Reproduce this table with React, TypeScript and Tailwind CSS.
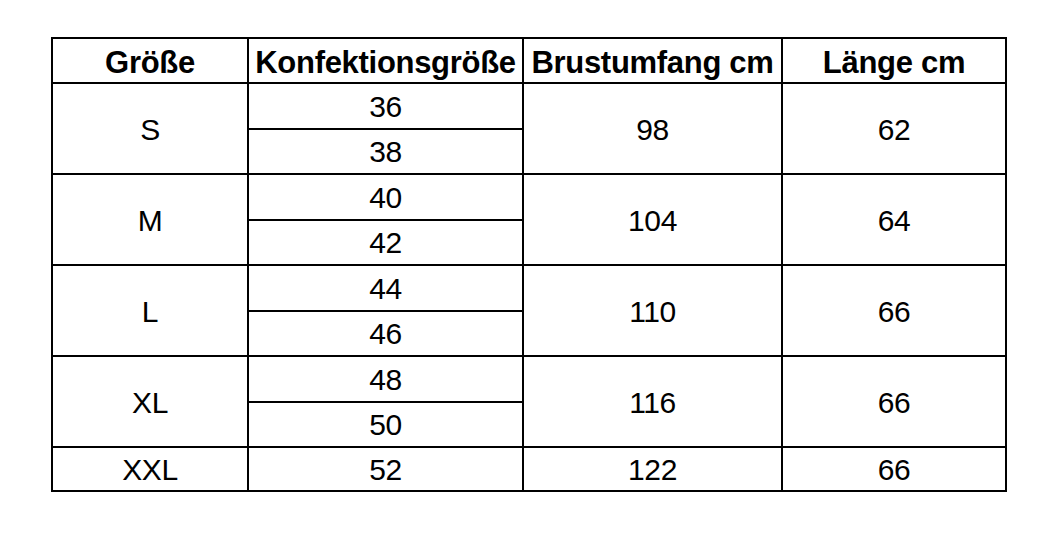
const groups = [
  { size: "S", sub: ["36", "38"], brust: "98", laenge: "62" },
  { size: "M", sub: ["40", "42"], brust: "104", laenge: "64" },
  { size: "L", sub: ["44", "46"], brust: "110", laenge: "66" },
  { size: "XL", sub: ["48", "50"], brust: "116", laenge: "66" },
]

const cell = "border-2 border-black text-center align-middle p-0"

export default function App() {
  return (
    <div className="w-[1060px] h-[541px] bg-white pl-[51px] pt-[37px] font-['Liberation_Sans',Arial,sans-serif] text-black">
      <table className="border-collapse border-2 border-black table-fixed w-[954px]">
        <colgroup>
          <col className="w-[196px]" />
          <col className="w-[275px]" />
          <col className="w-[259px]" />
          <col className="w-[224px]" />
        </colgroup>
        <thead>
          <tr className="h-[45px]">
            {["Größe", "Konfektionsgröße", "Brustumfang cm", "Länge cm"].map((h) => (
              <th
                key={h}
                className={`${cell} pt-[3px] font-bold text-[31px] leading-none tracking-[-0.3px]`}
              >
                {h}
              </th>
            ))}
          </tr>
        </thead>
        <tbody className="text-[30px] leading-none tracking-[-0.4px]">
          {groups.map((g) => [
            <tr key={g.size + "a"} className="h-[45.5px]">
              <td rowSpan={2} className={`${cell} pt-[3px]`}>{g.size}</td>
              <td className={`${cell} pt-[3px]`}>{g.sub[0]}</td>
              <td rowSpan={2} className={`${cell} pt-[3px]`}>{g.brust}</td>
              <td rowSpan={2} className={`${cell} pt-[3px]`}>{g.laenge}</td>
            </tr>,
            <tr key={g.size + "b"} className="h-[45.5px]">
              <td className={`${cell} pt-[2px]`}>{g.sub[1]}</td>
            </tr>,
          ])}
          <tr className="h-[44px]">
            <td className={`${cell} pt-[2px]`}>XXL</td>
            <td className={`${cell} pt-[2px]`}>52</td>
            <td className={`${cell} pt-[2px]`}>122</td>
            <td className={`${cell} pt-[2px]`}>66</td>
          </tr>
        </tbody>
      </table>
    </div>
  )
}
